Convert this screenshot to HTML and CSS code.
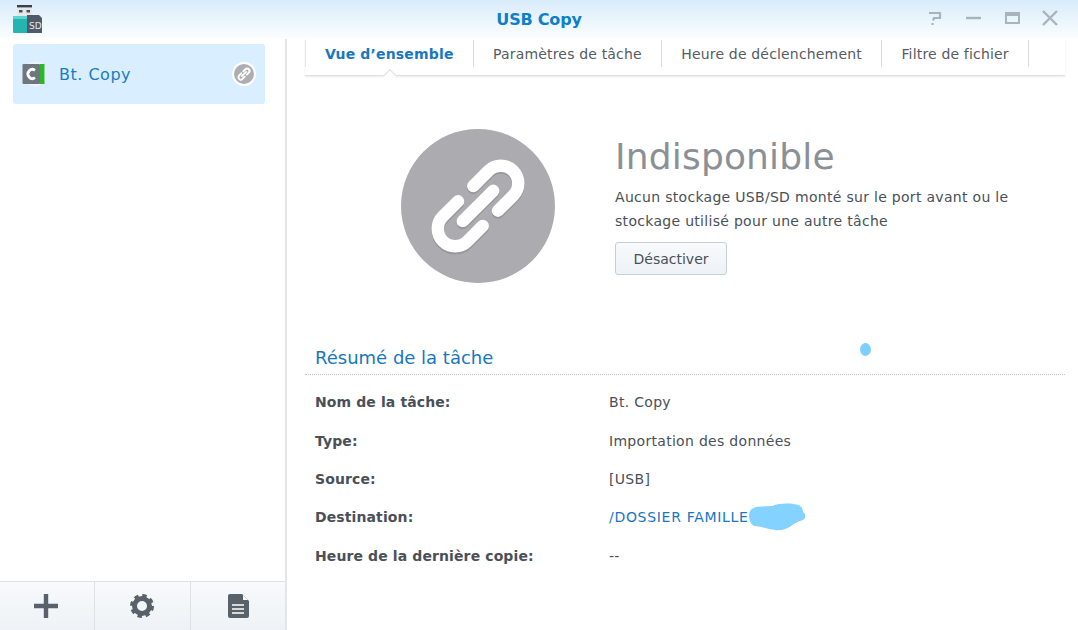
FILE: index.html
```html
<!DOCTYPE html>
<html lang="fr">
<head>
    <meta charset="UTF-8">
    <meta name="viewport" content="width=device-width, initial-scale=1.0">
    <title>USB Copy</title>
    <link rel="stylesheet" href="styles.css">
</head>
<body>
    <header class="titlebar">
        <svg class="app-icon" width="32" height="34" viewBox="0 0 32 34">
            <rect x="5" y="5" width="15" height="11" fill="#e4e8eb"/>
            <rect x="5" y="5" width="15" height="2.4" fill="#3a3f47"/>
            <rect x="7" y="10" width="3.5" height="2.5" fill="#4a5058"/>
            <rect x="14.5" y="10" width="3.5" height="2.5" fill="#4a5058"/>
            <rect x="1" y="16" width="15" height="17" rx="1" fill="#25b5b0"/>
            <rect x="1" y="16" width="15" height="3" fill="#5fd3cc"/>
            <path d="M15 15h12l3 3v15H15z" fill="#4f5a6b"/>
            <text x="17" y="29" class="sd-label">SD</text>
        </svg>
        <h1 class="app-title">USB Copy</h1>
        <div class="win-controls">
            <svg width="20" height="20" viewBox="0 0 20 20"><path d="M4 5h11v5H9L8 12.500M7.500 15v2" fill="none" stroke="#a9b3bc" stroke-width="2.200"/></svg>
            <svg width="20" height="20" viewBox="0 0 20 20"><path d="M3 10h15" stroke="#a9b3bc" stroke-width="2.400"/></svg>
            <svg width="20" height="20" viewBox="0 0 20 20"><path d="M4 5h13v10H4z" fill="none" stroke="#a9b3bc" stroke-width="2"/><rect x="3" y="4" width="15" height="4" fill="#a9b3bc"/></svg>
            <svg width="20" height="20" viewBox="0 0 20 20"><path d="M3 3l14 14M17 3L3 17" stroke="#a9b3bc" stroke-width="2.400"/></svg>
        </div>
    </header>

    <div class="layout">
        <aside class="sidebar">
            <div class="task-list">
                <div class="task-item">
                    <svg class="task-icon" width="26" height="26" viewBox="0 0 26 26">
                        <circle cx="15" cy="13" r="12.500" fill="#edf5fb"/>
                        <rect x="2.500" y="3" width="17.500" height="20" rx="1" fill="#6e7680"/>
                        <path d="M15 9.300a4.500 4.500 0 1 0 0 7.400" fill="none" stroke="#fff" stroke-width="2.800"/>
                        <rect x="20" y="3" width="4.500" height="20" fill="#2fb52a"/>
                    </svg>
                    <span class="task-name">Bt. Copy</span>
                    <svg class="task-status" width="24" height="24" viewBox="0 0 24 24">
                        <circle cx="12" cy="12" r="12" fill="#fff"/>
                        <circle cx="12" cy="12" r="10" fill="#aeaeb2"/>
                        <g transform="translate(2 2) scale(.13)" fill="none" stroke="#fff" stroke-width="15" stroke-linecap="round">
                            <path d="M72 56L88 40A18 18 0 0 1 114 66L98 82"/>
                            <path d="M82 98L66 114A18 18 0 0 1 40 88L56 72"/>
                            <path d="M61 93L93 61"/>
                        </g>
                    </svg>
                </div>
            </div>
            <div class="toolbar">
                <button class="tool-btn">
                    <svg class="plus-icon" width="26" height="26" viewBox="0 0 26 26"><path d="M13 1v24M1 13h24" stroke="#59616b" stroke-width="4.400"/></svg>
                </button>
                <button class="tool-btn">
                    <svg width="26" height="26" viewBox="0 0 26 26">
                        <circle cx="13" cy="13" r="7.500" fill="none" stroke="#59616b" stroke-width="5"/>
                        <circle cx="13" cy="13" r="10" fill="none" stroke="#59616b" stroke-width="4" stroke-dasharray="4.200 3.650"/>
                    </svg>
                </button>
                <button class="tool-btn">
                    <svg width="26" height="26" viewBox="0 0 26 26">
                        <path d="M3 3a2 2 0 0 1 2-2h12l7 7v15a2 2 0 0 1-2 2H5a2 2 0 0 1-2-2z" fill="#59616b"/>
                        <path d="M18 2v5h5z" fill="#fff"/>
                        <path d="M7 12h12M7 16h12M7 20h12" stroke="#fff" stroke-width="1.600"/>
                    </svg>
                </button>
            </div>
        </aside>

        <main class="content">
            <nav class="tabs">
                <a class="tab active">Vue d’ensemble</a>
                <a class="tab">Paramètres de tâche</a>
                <a class="tab">Heure de déclenchement</a>
                <a class="tab">Filtre de fichier</a>
            </nav>

            <section class="status">
                <svg class="status-icon" width="154" height="154" viewBox="0 0 154 154">
                    <circle cx="77" cy="77" r="77" fill="#acacb0"/>
                    <g fill="none" transform="translate(77 77) scale(.95) translate(-77 -77)">
                        <g stroke="#97979b" stroke-width="13" stroke-linecap="round" transform="translate(0 2)">
                            <path d="M72 56L88 40A18 18 0 0 1 114 66L98 82"/>
                            <path d="M82 98L66 114A18 18 0 0 1 40 88L56 72"/>
                            <path d="M61 93L93 61"/>
                        </g>
                        <g stroke="#fff" stroke-width="13" stroke-linecap="round">
                            <path d="M72 56L88 40A18 18 0 0 1 114 66L98 82"/>
                            <path d="M82 98L66 114A18 18 0 0 1 40 88L56 72"/>
                            <path d="M61 93L93 61"/>
                        </g>
                    </g>
                </svg>
                <div class="status-text">
                    <h2 class="status-title">Indisponible</h2>
                    <p class="status-desc">Aucun stockage USB/SD monté sur le port avant ou le stockage utilisé pour une autre tâche</p>
                    <button class="btn">Désactiver</button>
                </div>
            </section>

            <section class="summary">
                <h3 class="summary-title">Résumé de la tâche</h3>
                <dl class="summary-list">
                    <dt>Nom de la tâche:</dt><dd>Bt. Copy</dd>
                    <dt>Type:</dt><dd>Importation des données</dd>
                    <dt>Source:</dt><dd>[USB]</dd>
                    <dt>Destination:</dt><dd><a class="link">/DOSSIER FAMILLE</a></dd>
                    <dt>Heure de la dernière copie:</dt><dd>--</dd>
                </dl>
            </section>
        </main>
    </div>

    <!-- taches de masquage par-dessus la capture -->
    <div class="blot blot-dot"></div>
    <svg class="blot blot-name" width="60" height="28" viewBox="0 0 60 28">
        <path d="M2 8C6 2 14 4 24 3 32 0 42 0 50 2c4 1 5 5 5 7 3 2 3 6 0 8-6 2-8 3-12 6-4 3-10 5-16 4C20 26 12 23 6 23 1 20 0 12 2 8z" fill="#84d2ff"/>
    </svg>
</body>
</html>
```

FILE: styles.css
```css
html, body {
    height: 100%;
}
body {
    display: flex;
    flex-direction: column;
    margin: 0;
    height: 630px;
    overflow: hidden;
    position: relative;
    background: #fff;
    font-family: "DejaVu Sans", Verdana, sans-serif;
    font-size: 14px;
    color: #4a5058;
}
.titlebar {
    display: flex;
    align-items: center;
    justify-content: center;
    position: relative;
    height: 39px;
    flex: none;
    background: linear-gradient(#d9ebfa, #fcfeff);
}
.app-icon {
    position: absolute;
    left: 12px;
    top: 0;
}
.sd-label {
    font-size: 9px;
    fill: #e6e9ee;
}
.app-title {
    margin: 0;
    font-size: 16px;
    font-weight: bold;
    letter-spacing: -0.2px;
    color: #0d7fcb;
}
.win-controls {
    position: absolute;
    right: 18px;
    top: 8px;
    display: flex;
    gap: 18.5px;
}
.layout {
    display: flex;
    flex: 1;
    min-height: 0;
}
.sidebar {
    display: flex;
    flex-direction: column;
    width: 285px;
    flex: none;
    border-right: 2px solid #e3e6e9;
}
.task-list {
    flex: 1;
    padding: 5px 20px 0 13px;
}
.task-item {
    display: flex;
    align-items: center;
    height: 60px;
    padding: 0 9px 0 7px;
    border-radius: 3px;
    background: #d9eeff;
}
.task-name {
    flex: 1;
    margin-left: 13px;
    font-size: 16px;
    letter-spacing: 0.5px;
    color: #1a7cc4;
}
.toolbar {
    display: flex;
    height: 48px;
    flex: none;
    border-top: 1px solid #dde2e7;
    background: linear-gradient(#f8fafc, #eef2f6);
}
.tool-btn {
    display: flex;
    align-items: center;
    justify-content: center;
    flex: 1;
    padding: 0;
    border: none;
    border-right: 1px solid #dde2e7;
    background: none;
}
.tool-btn:last-child {
    border-right: none;
}
.plus-icon {
    margin-right: 2px;
}
.content {
    flex: 1;
    min-width: 0;
    padding: 0 13px 0 18px;
}
.tabs {
    display: flex;
    height: 36px;
    border-bottom: 1px solid #dcdfe2;
    box-shadow: 0 1px 2px rgba(0, 0, 0, 0.08);
    position: relative;
}
.tab {
    display: flex;
    align-items: center;
    height: 27px;
    margin-top: 1px;
    padding: 0 19.5px 0 19px;
    border-right: 1px solid #d8dcdf;
    font-size: 14px;
    letter-spacing: 0.17px;
    color: #565c63;
}
.tab.active {
    position: relative;
    padding: 0 19.5px 0 19px;
    border-left: 1px solid #e4e7ea;
    font-weight: bold;
    color: #1877be;
}
.tab.active::after {
    content: "";
    position: absolute;
    left: 50%;
    bottom: -14px;
    width: 9px;
    height: 9px;
    margin-left: -5px;
    transform: rotate(45deg);
    background: #fff;
    border-left: 1px solid #dcdfe2;
    border-top: 1px solid #dcdfe2;
}
.status {
    display: flex;
    padding: 53px 0 0 96px;
    height: 232px;
    box-sizing: border-box;
}
.status-icon {
    flex: none;
}
.status-text {
    margin-left: 60px;
    width: 420px;
}
.status-title {
    margin: 6px 0 0;
    font-size: 36px;
    font-weight: normal;
    line-height: 44px;
    letter-spacing: 0.17px;
    color: #8b9097;
}
.status-desc {
    margin: 6px 0 0;
    font-size: 14px;
    line-height: 24px;
    letter-spacing: 0.3px;
    color: #4a5058;
}
.btn {
    display: block;
    margin-top: 9px;
    width: 112px;
    height: 33px;
    padding: 0;
    border: 1px solid #c6ced6;
    border-radius: 3px;
    background: linear-gradient(#f8fafc, #edf2f7);
    font-family: inherit;
    font-size: 14px;
    color: #4a5058;
}
.summary {
    margin-top: 38px;
}
.summary-title {
    margin: 0;
    padding: 0 10px 5px;
    border-bottom: 1px dotted #c4c8cc;
    font-size: 18px;
    font-weight: normal;
    line-height: 23px;
    color: #1877be;
}
.summary-list {
    display: grid;
    grid-template-columns: 294px 1fr;
    grid-auto-rows: 38.4px;
    align-items: center;
    margin: 8px 0 0;
    padding-left: 10px;
    font-size: 14px;
}
.summary-list dt {
    font-weight: bold;
    letter-spacing: 0.11px;
}
.summary-list dd {
    margin: 0;
    letter-spacing: 0.3px;
}
.summary-list dd .link {
    letter-spacing: 0.7px;
    color: #1877be;
}
.blot {
    position: absolute;
}
.blot-dot {
    left: 860px;
    top: 343px;
    width: 11px;
    height: 13px;
    border-radius: 50%;
    background: #7dcfff;
}
.blot-name {
    left: 748px;
    top: 503px;
}
```
